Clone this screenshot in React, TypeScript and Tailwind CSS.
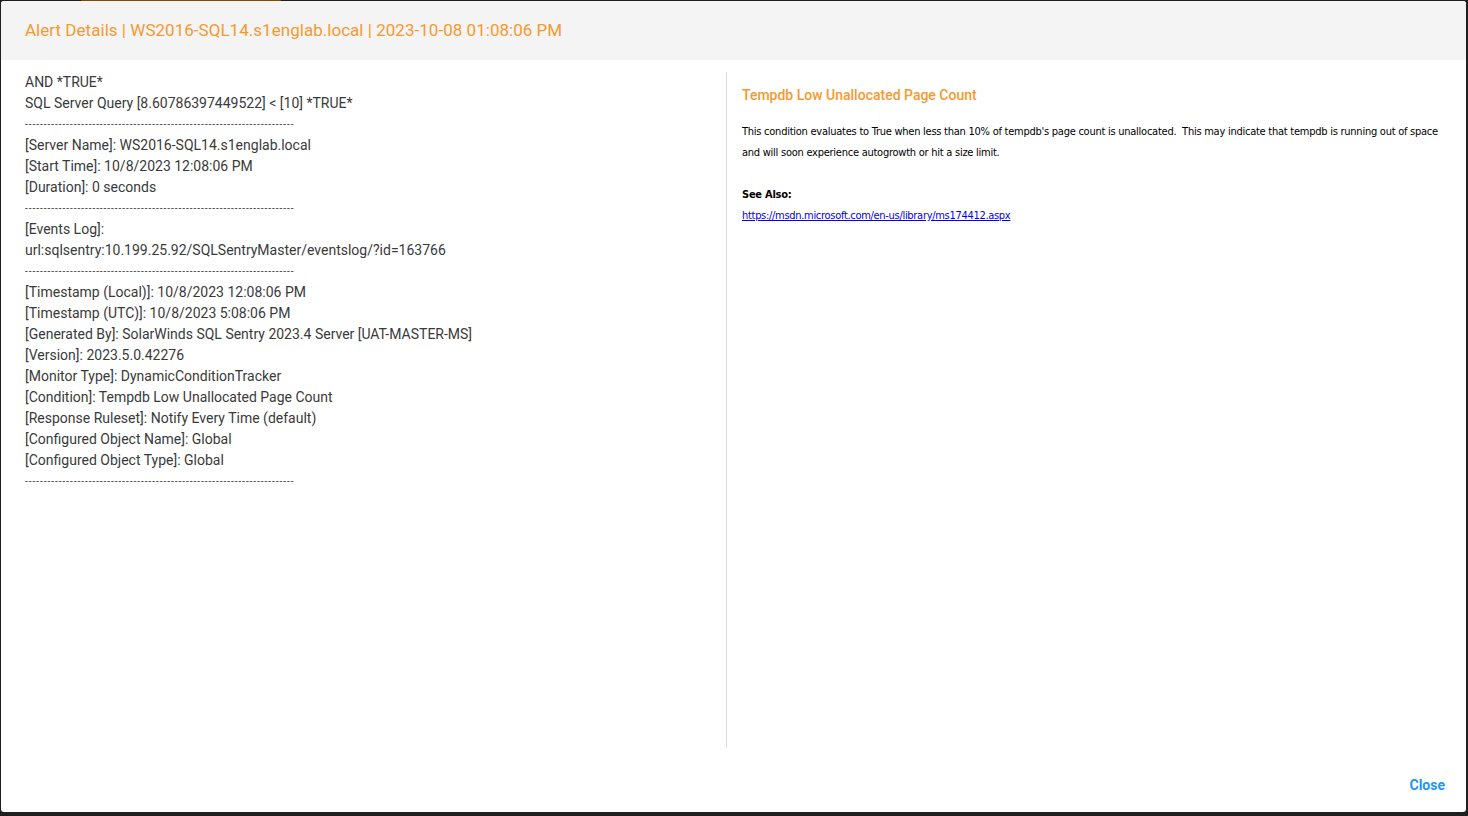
import React from "react";

const lines1 = [
  "AND *TRUE*",
  "SQL Server Query [8.60786397449522] < [10] *TRUE*",
];
const dash = "------------------------------------------------------------------------";

export default function App() {
  const roboto = { fontFamily: "Roboto, 'Liberation Sans', sans-serif" };
  const Line = ({ t }: { t: string }) => <div className="h-[21px] leading-[21px] whitespace-pre">{t}</div>;
  const Dash = () => <div className="h-[21px] leading-[21px] text-[10px] tracking-[0.98px] overflow-hidden whitespace-nowrap">{dash}</div>;
  return (
    <div className="w-[1468px] h-[816px] bg-[#1f1f1f] flex flex-col overflow-hidden" style={roboto}>
      <div className="h-px flex pl-[81px]"><div className="w-[200px] h-px bg-[#7a4a00]" /></div>
      <div className="ml-px mr-[2px] h-[811px] bg-white rounded-[3px] flex flex-col overflow-hidden">
        <div className="h-[59px] bg-[#f4f4f4] flex items-center pl-[24px] text-[17px] text-[#f7992e] tracking-[0.03px]">
          Alert Details | WS2016-SQL14.s1englab.local | 2023-10-08 01:08:06 PM
        </div>
        <div className="flex flex-1 pt-[12px]">
          <div className="w-[726px] pl-[24px] text-[14px] text-[#3a3a3a] border-r border-[#dddddd] h-[676px]">
            {lines1.map((t) => <Line key={t} t={t} />)}
            <Dash />
            <Line t="[Server Name]: WS2016-SQL14.s1englab.local" />
            <Line t="[Start Time]: 10/8/2023 12:08:06 PM" />
            <Line t="[Duration]: 0 seconds" />
            <Dash />
            <Line t="[Events Log]:" />
            <Line t="url:sqlsentry:10.199.25.92/SQLSentryMaster/eventslog/?id=163766" />
            <Dash />
            <Line t="[Timestamp (Local)]: 10/8/2023 12:08:06 PM" />
            <Line t="[Timestamp (UTC)]: 10/8/2023 5:08:06 PM" />
            <Line t="[Generated By]: SolarWinds SQL Sentry 2023.4 Server [UAT-MASTER-MS]" />
            <Line t="[Version]: 2023.5.0.42276" />
            <Line t="[Monitor Type]: DynamicConditionTracker" />
            <Line t="[Condition]: Tempdb Low Unallocated Page Count" />
            <Line t="[Response Ruleset]: Notify Every Time (default)" />
            <Line t="[Configured Object Name]: Global" />
            <Line t="[Configured Object Type]: Global" />
            <Dash />
          </div>
          <div className="flex-1 pl-[15px] pr-[20px] pt-[11px]">
            <div className="text-[14px] font-medium text-[#f7992e] leading-[24px]">Tempdb Low Unallocated Page Count</div>
            <div className="mt-[14px] text-[11px] leading-[21px] text-black tracking-[-0.25px]" style={{ fontFamily: "'DejaVu Sans Condensed', 'Liberation Sans Narrow', 'Liberation Sans', sans-serif" }}>
              <div className="whitespace-nowrap">This condition evaluates to True when less than 10% of tempdb's page count is unallocated.&nbsp; This may indicate that tempdb is running out of space</div>
              <div>and will soon experience autogrowth or hit a size limit.</div>
              <div className="h-[21px]" />
              <div className="font-bold">See Also:</div>
              <a className="text-[#0000ee] underline tracking-[-0.3px]" href="#">https://msdn.microsoft.com/en-us/library/ms174412.aspx</a>
            </div>
          </div>
        </div>
        <div className="h-[64px] flex items-start justify-end pr-[21px] pt-[27px]">
          <span className="text-[14px] font-bold text-[#2196f3]">Close</span>
        </div>
      </div>
    </div>
  );
}
